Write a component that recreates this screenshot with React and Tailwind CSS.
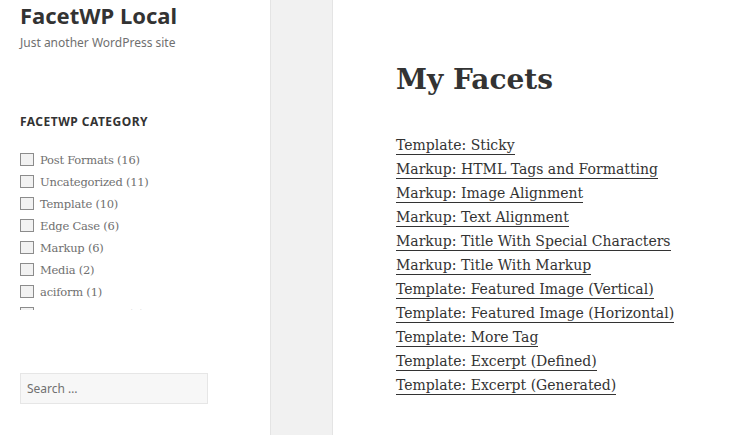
const categories = [
  "Post Formats (16)",
  "Uncategorized (11)",
  "Template (10)",
  "Edge Case (6)",
  "Markup (6)",
  "Media (2)",
  "aciform (1)",
  "antiquarianism (1)",
]

const posts = [
  "Template: Sticky",
  "Markup: HTML Tags and Formatting",
  "Markup: Image Alignment",
  "Markup: Text Alignment",
  "Markup: Title With Special Characters",
  "Markup: Title With Markup",
  "Template: Featured Image (Vertical)",
  "Template: Featured Image (Horizontal)",
  "Template: More Tag",
  "Template: Excerpt (Defined)",
  "Template: Excerpt (Generated)",
]

const sans = "font-['Noto_Sans',sans-serif]"
const serif = "font-['DejaVu_Serif','Liberation_Serif',serif]"

export default function App() {
  return (
    <div className="flex h-[435px] w-[735px] overflow-hidden bg-white">
      <aside className={`w-[270px] shrink-0 bg-white px-5 ${sans}`}>
        <h1 className="pt-[1px] text-[22px] font-bold leading-[28px] text-[#333]">FacetWP Local</h1>
        <p className="mt-[5px] text-[12px] leading-[18px] text-[#707070]">Just another WordPress site</p>

        <h2 className="mt-[61px] text-[12px] font-bold uppercase leading-[18px] tracking-[0.04em] text-[#333]">
          FacetWP Category
        </h2>
        {/* facet list is height-capped, last item peeks out */}
        <div className={`mt-[20px] h-[159px] overflow-hidden ${serif}`}>
          {categories.map((c) => (
            <div key={c} className="flex h-[22px] items-start gap-[6px] pt-[2px]">
              <span className="h-[13px] w-[14px] shrink-0 border border-[#8c8c8c] bg-[#f2f2f2]" />
              <span className="-mt-[1px] text-[11.5px] leading-[16px] tracking-[-0.02em] text-[#707070]">{c}</span>
            </div>
          ))}
        </div>

        <div className="mt-[63px] flex h-[31px] w-[188px] items-center border border-[#e6e6e6] bg-[#f7f7f7] px-[6px] text-[12px] text-[#707070]">
          Search …
        </div>
      </aside>

      <div className="w-[63px] shrink-0 border-x border-[#e4e4e4] bg-[#f1f1f1]" />

      <main className={`flex-1 pl-[63px] text-[#333] ${serif}`}>
        <h1 className="mt-[60px] text-[28px] font-bold leading-[40px]">My Facets</h1>
        <ul className="mt-[34px]">
          {posts.map((p) => (
            <li key={p} className="h-[24px] text-[14px] leading-[22px]">
              <a className="border-b border-[#333] pb-[1px]">{p}</a>
            </li>
          ))}
        </ul>
      </main>
    </div>
  )
}
